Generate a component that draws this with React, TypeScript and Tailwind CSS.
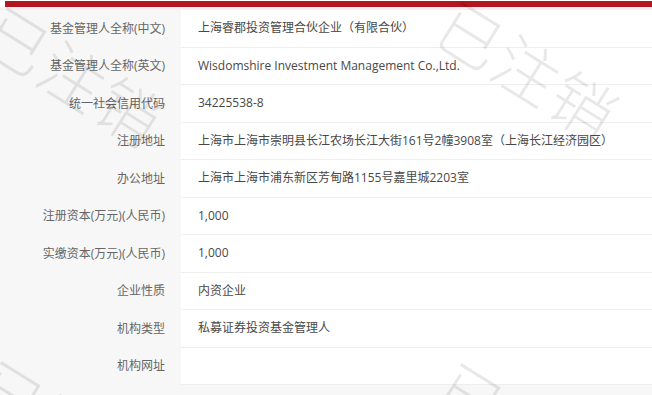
import React from 'react';

interface Row {
  label: string;
  value: string;
}

const rows: Row[] = [
  { label: '基金管理人全称(中文)', value: '上海睿郡投资管理合伙企业（有限合伙）' },
  { label: '基金管理人全称(英文)', value: 'Wisdomshire Investment Management Co.,Ltd.' },
  { label: '统一社会信用代码', value: '34225538-8' },
  { label: '注册地址', value: '上海市上海市崇明县长江农场长江大街161号2幢3908室（上海长江经济园区）' },
  { label: '办公地址', value: '上海市上海市浦东新区芳甸路1155号嘉里城2203室' },
  { label: '注册资本(万元)(人民币)', value: '1,000' },
  { label: '实缴资本(万元)(人民币)', value: '1,000' },
  { label: '企业性质', value: '内资企业' },
  { label: '机构类型', value: '私募证券投资基金管理人' },
  { label: '机构网址', value: '' },
];

// stamp positions, the page tiles the same mark
const stamps = [
  { left: 6, top: -2 },
  { left: 460, top: -8 },
  { left: 0, top: 352 },
  { left: 460, top: 354 },
];

function Stamp({ left, top }: { left: number; top: number }) {
  return (
    <span
      className="absolute origin-top-left rotate-[32deg] whitespace-nowrap text-[64px] leading-none font-extralight tracking-[2px] text-black/[0.09]"
      style={{ left, top }}
    >
      已注销
    </span>
  );
}

export default function App() {
  return (
    <div
      className="relative w-[652px] h-[395px] overflow-hidden bg-[#f7f7f7]"
      style={{ fontFamily: '"Open Sans", "Noto Sans CJK SC", sans-serif' }}
    >
      <div className="bg-white pt-px pl-[5px]">
        <div className="h-[6px] bg-[#b3161e]" />
      </div>
      <div className="h-[3px] bg-[#fbeeee]" />
      <div className="flex flex-col">
        {rows.map((row) => (
          <div key={row.label} className="flex h-[37.5px] text-[12px]">
            <div className="w-[181px] shrink-0 flex items-center justify-end pr-[16px] text-[#666]">
              {row.label}
            </div>
            <div className="flex-1 flex items-center bg-white border-b border-[#eeeeee] pl-[17px] text-[#484848]">
              {row.value}
            </div>
          </div>
        ))}
      </div>
      <div className="pointer-events-none absolute inset-0">
        {stamps.map((s, i) => (
          <Stamp key={i} left={s.left} top={s.top} />
        ))}
      </div>
    </div>
  );
}
